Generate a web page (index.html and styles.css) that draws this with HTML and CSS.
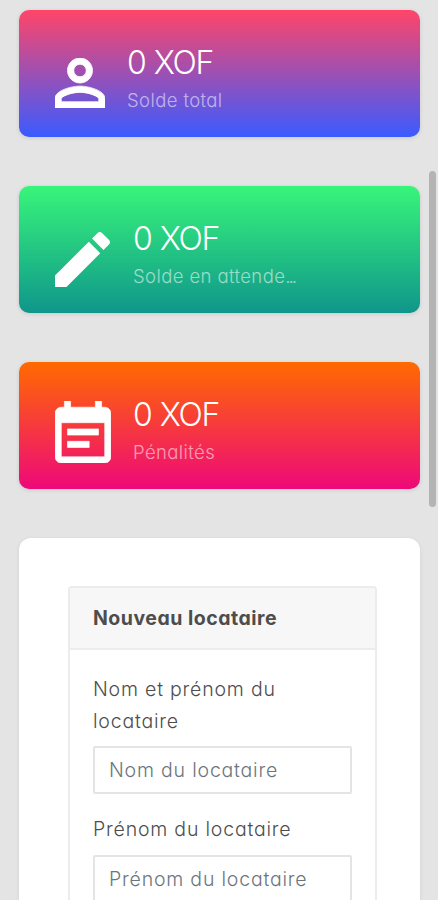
FILE: index.html
```html
<!DOCTYPE html>
<html lang="fr">
<head>
	<meta charset="utf-8">
	<meta name="viewport" content="width=device-width, initial-scale=1">
	<title>Nouveau locataire</title>
	<link rel="stylesheet" href="styles.css">
</head>
<body>
	<div class="content">
		<div class="stat total">
			<svg class="icon person" viewBox="4 4 16 16">
				<path d="M12 6a2 2 0 1 1 0 4 2 2 0 0 1 0-4m0 9c2.97 0 6 1.36 6 2v1H6v-1c0-.64 3.03-2 6-2M12 4C9.79 4 8 5.79 8 8s1.79 4 4 4 4-1.79 4-4-1.79-4-4-4zm0 9c-2.67 0-8 1.34-8 4v3h16v-3c0-2.66-5.33-4-8-4z"/>
			</svg>
			<div class="stat-text">
				<div class="amount">0 XOF</div>
				<div class="caption">Solde total</div>
			</div>
		</div>

		<div class="stat pending">
			<svg class="icon pencil" viewBox="3 3 18 18">
				<path d="M3 17.25V21h3.75L17.81 9.94l-3.75-3.75L3 17.25zM20.71 7.04c.39-.39.39-1.02 0-1.41l-2.34-2.34c-.39-.39-1.02-.39-1.41 0l-1.83 1.83 3.75 3.75 1.83-1.83z"/>
			</svg>
			<div class="stat-text">
				<div class="amount">0 XOF</div>
				<div class="caption">Solde en attende<span class="dots">...</span></div>
			</div>
		</div>

		<div class="stat penalty">
			<svg class="icon note" viewBox="3 1 18 20">
				<path d="M14 14H7v2h7v-2zm5 5H5V8h14v11zm0-16h-1V1h-2v2H8V1H6v2H5c-1.11 0-1.99.9-1.99 2L3 19c0 1.1.89 2 2 2h14c1.1 0 2-.9 2-2V5c0-1.1-.9-2-2-2zm-2 7H7v2h10v-2z"/>
			</svg>
			<div class="stat-text">
				<div class="amount">0 XOF</div>
				<div class="caption">Pénalités</div>
			</div>
		</div>

		<div class="panel">
			<form class="card">
				<div class="card-header">Nouveau locataire</div>
				<div class="card-body">
					<label for="nom">Nom et prénom du locataire</label>
					<input type="text" id="nom" placeholder="Nom du locataire">
					<label for="prenom">Prénom du locataire</label>
					<input type="text" id="prenom" placeholder="Prénom du locataire">
				</div>
			</form>
		</div>
	</div>
	<div class="scroll-thumb"></div>
</body>
</html>
```
FILE: styles.css
```css
* {
	box-sizing: border-box;
}

body {
	margin: 0;
	height: 900px;
	overflow: hidden;
	background: #e4e4e4;
	color: #4d4d4d;
	font-family: Inter, "Open Sans", sans-serif;
	font-feature-settings: "cv11";
	font-weight: 300;
}

.content {
	height: 900px;
	overflow: hidden;
	padding: 10px 18px 0 19px;
}

.stat {
	display: flex;
	height: 127px;
	margin-bottom: 49px;
	padding-left: 36px;
	border-radius: 10px;
	box-shadow: 0 1px 4px rgba(0, 0, 0, 0.12);
	color: #fff;
}

.total {
	background: linear-gradient(#ff4568, #3a5bff);
}

.pending {
	background: linear-gradient(#38f57a, #0f968b);
}

.penalty {
	background: linear-gradient(#ff6a00, #ee0979);
}

.icon {
	flex: none;
	fill: #fff;
}

.person {
	width: 50px;
	height: 50px;
	margin-top: 48px;
	stroke: #fff;
	stroke-width: 0.25;
}

.pencil {
	width: 55px;
	height: 55px;
	margin: 46px 1px 0 0;
}

.note {
	width: 56px;
	height: 62px;
	margin-top: 39px;
	stroke: #fff;
	stroke-width: 0.2;
}

.stat-text {
	padding: 33px 0 0 22px;
}

.amount {
	height: 39px;
	font-size: 32px;
	line-height: 40px;
	letter-spacing: -1.5px;
	word-spacing: 1px;
	white-space: nowrap;
}

.caption {
	height: 36px;
	font-size: 18.5px;
	line-height: 36px;
	letter-spacing: 0.4px;
	white-space: nowrap;
	opacity: 0.55;
}

.dots {
	letter-spacing: -2px;
}

.panel {
	height: 362px;
	padding: 48px 43px 0 49px;
	background: #fff;
	border-radius: 12px 12px 0 0;
	box-shadow: 0 1px 4px rgba(0, 0, 0, 0.08);
}

.card {
	height: 314px;
	overflow: hidden;
	border: 2px solid #ececec;
	border-bottom: 0;
	border-radius: 4px 4px 0 0;
}

.card-header {
	height: 62px;
	padding-left: 23px;
	background: #f7f7f7;
	border-bottom: 2px solid #ececec;
	font-size: 19.5px;
	font-weight: 700;
	line-height: 61px;
	letter-spacing: 0.5px;
}

.card-body {
	padding: 24px 23px 0 23px;
}

label {
	display: block;
	margin-bottom: 9px;
	font-size: 19.5px;
	line-height: 31.5px;
	letter-spacing: 0.8px;
}

input {
	display: block;
	width: 100%;
	height: 48px;
	margin-bottom: 20px;
	padding: 0 14px;
	border: 2px solid #e2e4e6;
	border-radius: 2px;
	background: #fff;
	font: inherit;
	font-feature-settings: inherit;
	font-size: 19.5px;
	letter-spacing: 0.8px;
}

input::placeholder {
	color: #6c757d;
	opacity: 1;
}

.scroll-thumb {
	position: absolute;
	top: 171px;
	right: 2px;
	width: 7px;
	height: 336px;
	border-radius: 4px;
	background: #b4b4b4;
}
```
